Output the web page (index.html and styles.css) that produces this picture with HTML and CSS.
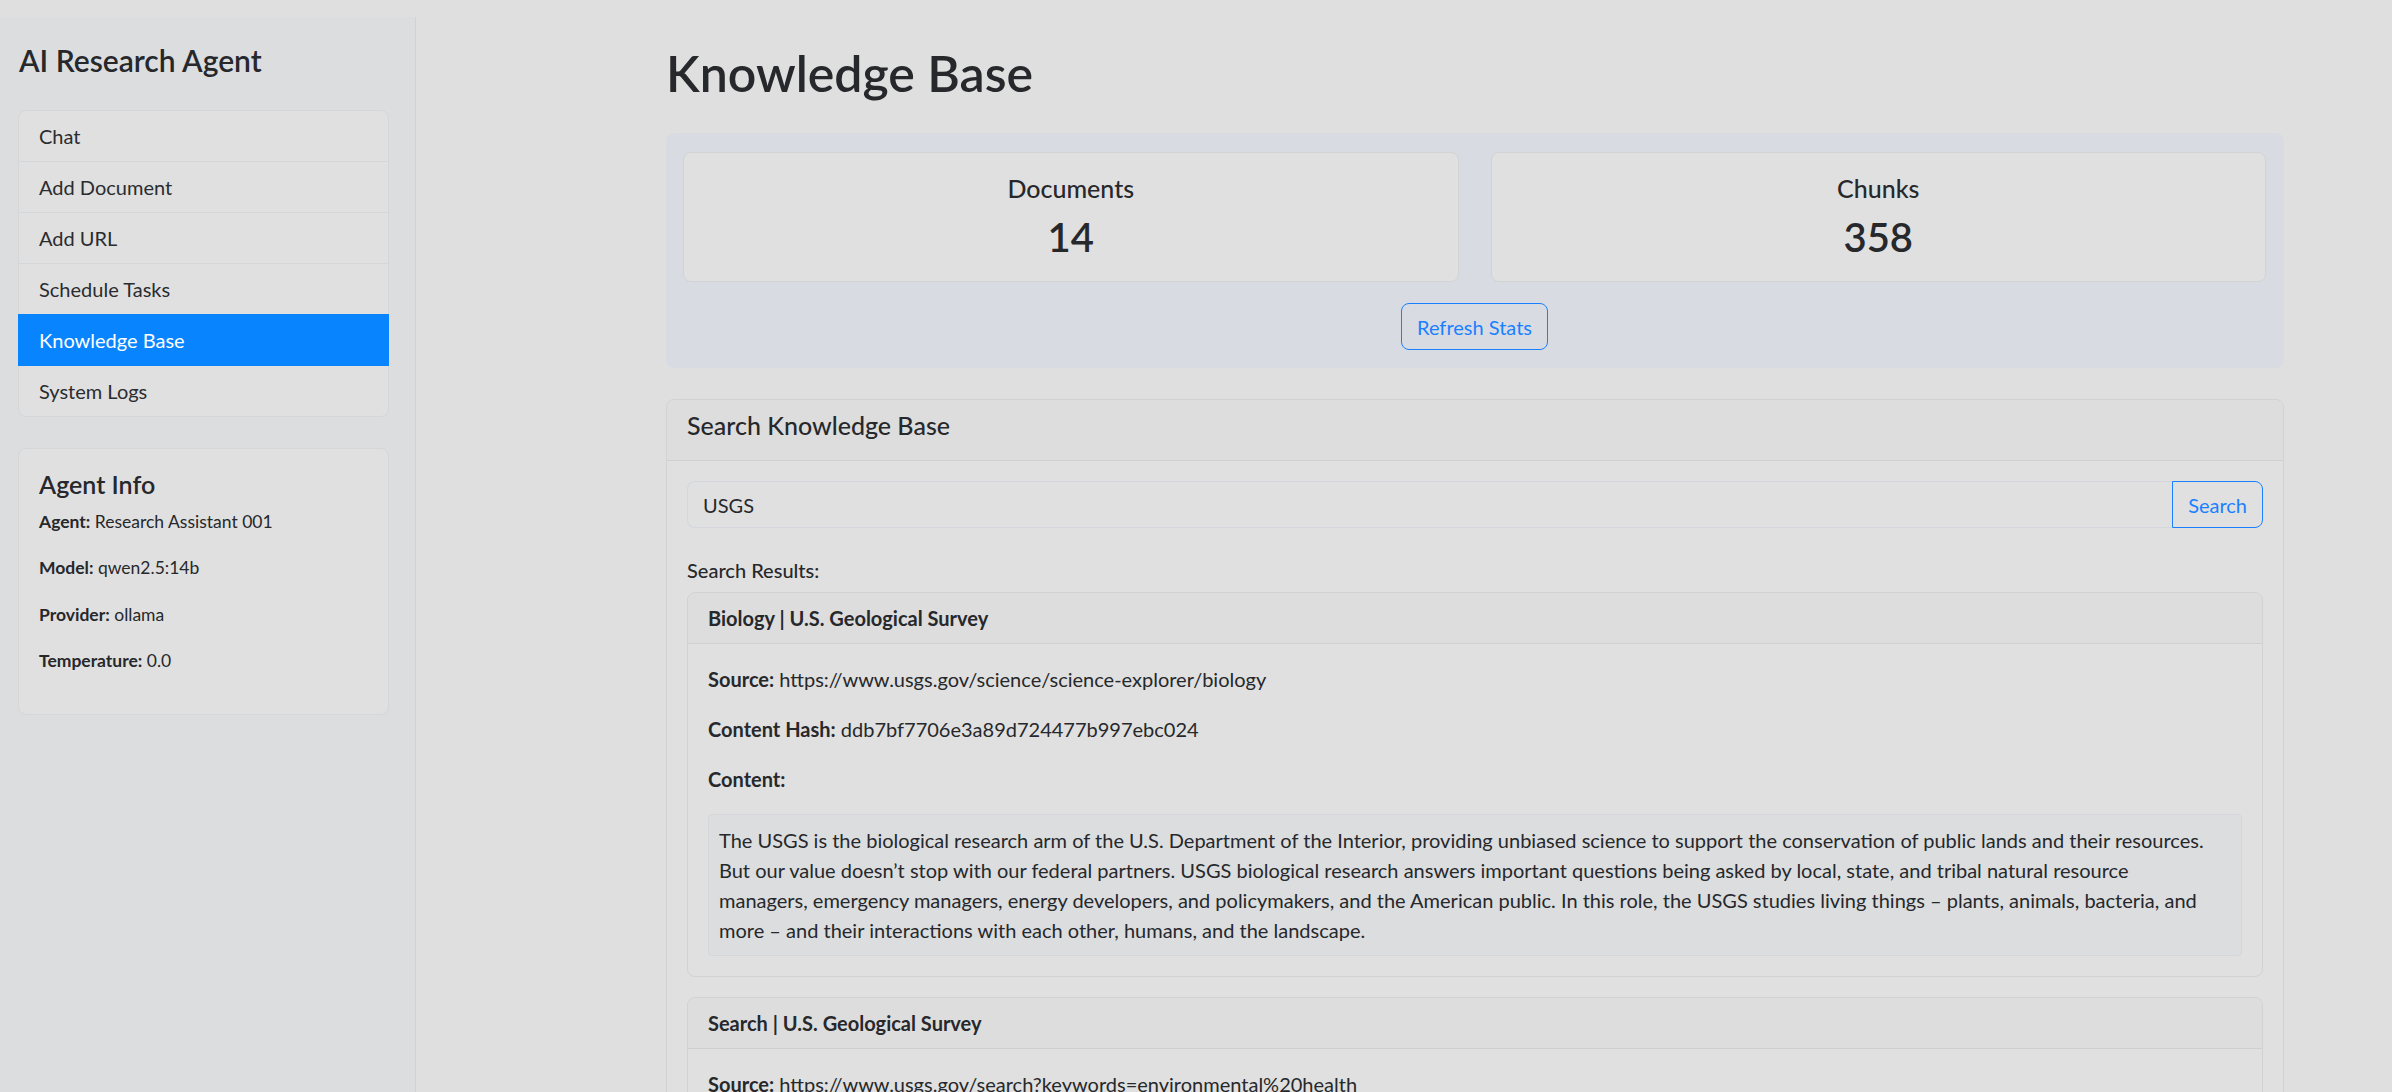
FILE: index.html
```html
<!DOCTYPE html>
<html lang="en">
<head>
<meta charset="utf-8">
<title>AI Research Agent - Knowledge Base</title>
<link rel="stylesheet" href="styles.css">
</head>
<body>
<div class="layout">
  <aside class="sidebar">
    <h4 class="brand">AI Research Agent</h4>
    <nav class="nav-list">
      <a class="nav-item" href="#">Chat</a>
      <a class="nav-item" href="#">Add Document</a>
      <a class="nav-item" href="#">Add URL</a>
      <a class="nav-item" href="#">Schedule Tasks</a>
      <a class="nav-item active" href="#">Knowledge Base</a>
      <a class="nav-item" href="#">System Logs</a>
    </nav>
    <div class="info-card">
      <h5 class="info-title">Agent Info</h5>
      <div class="info-body">
        <p class="info-line"><strong>Agent:</strong> Research Assistant 001</p>
        <p class="info-line"><strong>Model:</strong> qwen2.5:14b</p>
        <p class="info-line"><strong>Provider:</strong> ollama</p>
        <p class="info-line"><strong>Temperature:</strong> 0.0</p>
      </div>
    </div>
  </aside>

  <main class="main">
    <h1 class="page-title">Knowledge Base</h1>

    <section class="stats-panel">
      <div class="stats-row">
        <div class="stat-card">
          <h5 class="stat-label">Documents</h5>
          <h2 class="stat-value">14</h2>
        </div>
        <div class="stat-card">
          <h5 class="stat-label">Chunks</h5>
          <h2 class="stat-value">358</h2>
        </div>
      </div>
      <div class="stats-actions">
        <button class="btn-outline" type="button">Refresh Stats</button>
      </div>
    </section>

    <section class="card">
      <div class="card-header">
        <h5 class="card-title">Search Knowledge Base</h5>
      </div>
      <div class="card-body">
        <div class="input-group">
          <input class="search-input" type="text" value="USGS">
          <button class="btn-outline btn-attached" type="button">Search</button>
        </div>

        <h6 class="results-title">Search Results:</h6>

        <div class="result-card">
          <div class="result-header"><strong>Biology | U.S. Geological Survey</strong></div>
          <div class="result-body">
            <p class="result-line"><strong>Source:</strong> https://www.usgs.gov/science/science-explorer/biology</p>
            <p class="result-line"><strong>Content Hash:</strong> ddb7bf7706e3a89d724477b997ebc024</p>
            <p class="result-line"><strong>Content:</strong></p>
            <div class="result-content">The USGS is the biological research arm of the U.S. Department of the Interior, providing unbiased science to support the conservation of public lands and their resources.<br>But our value doesn’t stop with our federal partners. USGS biological research answers important questions being asked by local, state, and tribal natural resource<br>managers, emergency managers, energy developers, and policymakers, and the American public. In this role, the USGS studies living things – plants, animals, bacteria, and<br>more – and their interactions with each other, humans, and the landscape.</div>
          </div>
        </div>

        <div class="result-card">
          <div class="result-header"><strong>Search | U.S. Geological Survey</strong></div>
          <div class="result-body">
            <p class="result-line"><strong>Source:</strong> https://www.usgs.gov/search?keywords=environmental%20health</p>
          </div>
        </div>
      </div>
    </section>
  </main>
</div>
</body>
</html>
```

FILE: styles.css
```css
html, body {
  margin: 0;
  padding: 0;
}

body {
  background: #dfdfdf;
  color: #26282b;
  font-family: "Lato", "Segoe UI", "Noto Sans", sans-serif;
  font-size: 20px;
  line-height: 1.5;
}

h1, h2, h4, h5, h6, p {
  margin: 0;
}

.layout {
  display: flex;
  align-items: stretch;
  min-height: 100vh;
}

/* Sidebar */
.sidebar {
  box-sizing: border-box;
  width: 416px;
  flex: none;
  margin-top: 17px;
  padding: 25px 26px 0 18px;
  background: #dcdddf;
  border-right: 1px solid #d1d2d4;
}

.brand {
  font-size: 30px;
  font-weight: 600;
  line-height: 36px;
  margin: 0 0 32px 1px;
}

.nav-list {
  display: flex;
  flex-direction: column;
  border-radius: 8px;
}

.nav-item {
  display: block;
  padding: 10px 20px;
  line-height: 30px;
  color: #2a2c2f;
  text-decoration: none;
  background: #e0e0e0;
  border: 1px solid #d5d6d8;
}

.nav-item + .nav-item {
  border-top-width: 0;
}

.nav-item:first-child {
  border-top-left-radius: 8px;
  border-top-right-radius: 8px;
}

.nav-item:last-child {
  border-bottom-left-radius: 8px;
  border-bottom-right-radius: 8px;
}

.nav-item.active {
  margin-top: -1px;
  border-top-width: 1px;
  background: #0884ff;
  border-color: #0884ff;
  color: #ffffff;
}

.info-card {
  margin-top: 31px;
  padding: 20px 20px 0;
  background: #e0e0e0;
  border: 1px solid #d5d6d8;
  border-radius: 8px;
}

.info-title {
  font-size: 25px;
  font-weight: 600;
  line-height: 30px;
  margin-bottom: 10px;
}

.info-body {
  padding-bottom: 20px;
}

.info-line {
  font-size: 17.5px;
  line-height: 26.25px;
  margin-bottom: 20px;
}

.info-line strong,
.result-line strong,
.result-header strong {
  font-weight: 700;
}

/* Main */
.main {
  flex: 1;
  min-width: 0;
  padding: 43px 108px 0 250px;
}

.page-title {
  font-size: 50px;
  font-weight: 600;
  line-height: 60px;
  margin-bottom: 30px;
}

.stats-panel {
  background: #d8dce2;
  border-radius: 8px;
  padding: 19px 18px 18px 17px;
}

.stats-row {
  display: flex;
  gap: 32px;
}

.stat-card {
  flex: 1;
  background: #e0e0e0;
  border: 1px solid #d2d3d5;
  border-radius: 8px;
  padding: 20px;
  text-align: center;
}

.stat-label {
  font-size: 25px;
  font-weight: 500;
  line-height: 30px;
  margin-bottom: 10px;
}

.stat-value {
  font-size: 40px;
  font-weight: 600;
  line-height: 48px;
}

.stats-actions {
  display: flex;
  justify-content: center;
  margin-top: 21px;
}

.btn-outline {
  font-family: inherit;
  font-size: 20px;
  line-height: 30px;
  padding: 7.5px 15px;
  color: #1a80ff;
  background: transparent;
  border: 1px solid #1a80ff;
  border-radius: 8px;
  cursor: pointer;
}

/* Search card */
.card {
  margin-top: 31px;
  background: #e0e0e0;
  border: 1px solid #d2d2d2;
  border-radius: 8px;
  overflow: hidden;
}

.card-header {
  padding: 10px 20px;
  background: #dddddd;
  border-bottom: 1px solid #d0d0d0;
}

.card-title {
  font-size: 25px;
  font-weight: 500;
  line-height: 30px;
  margin-bottom: 10px;
}

.card-body {
  padding: 20px;
}

.input-group {
  display: flex;
}

.search-input {
  flex: 1;
  min-width: 0;
  box-sizing: border-box;
  height: 47px;
  font-family: inherit;
  font-size: 20px;
  line-height: 30px;
  padding: 7.5px 15px;
  color: #26282b;
  background: #e0e0e0;
  border: 1px solid #d3d6dc;
  border-right: 0;
  border-radius: 8px 0 0 8px;
  outline: none;
}

.btn-attached {
  border-radius: 0 8px 8px 0;
  height: 47px;
}

.results-title {
  font-size: 20px;
  font-weight: 500;
  line-height: 24px;
  margin: 30px 0 10px;
}

.result-card {
  border: 1px solid #d2d2d2;
  border-radius: 8px;
  margin-bottom: 20px;
  overflow: hidden;
}

.result-header {
  padding: 10px 20px;
  line-height: 30px;
  background: #dddddd;
  border-bottom: 1px solid #d0d0d0;
}

.result-body {
  padding: 20px;
}

.result-line {
  line-height: 30px;
  margin-bottom: 20px;
}

.result-content {
  padding: 10px;
  line-height: 30px;
  background: #dcdddf;
  border: 1px solid #d4d6d9;
  border-radius: 4px;
  white-space: nowrap;
}
```
